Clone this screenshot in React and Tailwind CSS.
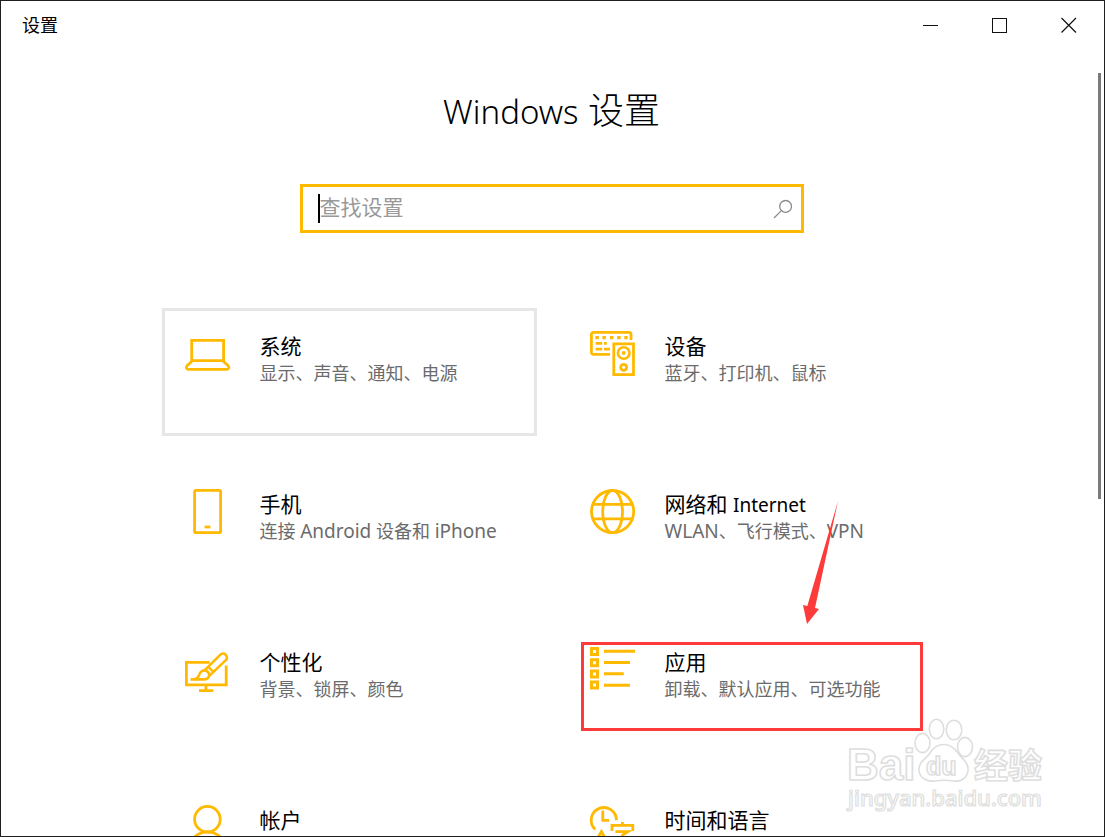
import React from "react";

function Icon({ children }) {
  return (
    <svg
      className="h-[46px] w-[46px] shrink-0 overflow-visible text-[#ffb900]"
      viewBox="0 0 46 46"
      fill="none"
      stroke="currentColor"
      strokeWidth="2.8"
      aria-hidden="true"
    >
      {children}
    </svg>
  );
}

const LaptopIcon = () => (
  <Icon>
    <path d="M6.7 9.4H38.6V29.6H6.7Z" />
    <path d="M7 30.2L2 34.8C1 36 1 38.4 3.4 38.4H41.8C44.2 38.4 44.2 36 43.2 34.8L38.2 30.2" />
  </Icon>
);

const DevicesIcon = () => (
  <Icon>
    <path d="M20 23.3H3.4A2 2 0 0 1 1.4 21.3V3.4A2 2 0 0 1 3.4 1.4H39A2 2 0 0 1 41 3.4V9" />
    <path d="M5.4 6.7h3.4M12.4 6.7h3.4M20 6.7h3.4M27.2 6.7h3.4M34.3 6.7h3.4" strokeWidth="3.2" />
    <path d="M5.6 12.4h6.6M14 12.4h2.8M5.6 18.2h6.6M14 18.2h6" />
    <path d="M23.8 12.8H43.5V43.6H23.8Z" />
    <circle cx="33.7" cy="22" r="5.8" strokeWidth="2.6" />
    <circle cx="33.7" cy="22" r="1.9" fill="currentColor" stroke="none" />
    <circle cx="33.7" cy="36.3" r="3" strokeWidth="2.8" />
  </Icon>
);

const PhoneIcon = () => (
  <Icon>
    <rect x="9.6" y="1.4" width="26" height="42.2" rx="1.2" />
    <path d="M19.6 38h5.8" />
  </Icon>
);

const GlobeIcon = () => (
  <Icon>
    <circle cx="22.6" cy="22.6" r="21.1" />
    <ellipse cx="22.6" cy="22.6" rx="9.9" ry="21.1" />
    <path d="M2.5 15.4H42.7M2.5 29.8H42.7" />
  </Icon>
);

const PersonalizeIcon = () => (
  <Icon>
    <path d="M24.6 15.4H1.4V37.9H41.2V18.6" />
    <path d="M21 38V43.4M14 43.6H28.4" />
    <path d="M19.8 23.2L35.2 7.8A3.8 3.8 0 0 1 40.8 13.2L24.6 28.6" strokeWidth="2.6" />
    <path d="M23.2 19.8L28.8 25.2" strokeWidth="2.4" />
    <path
      d="M5.6 32.4C11.5 32.8 13.4 31 14.2 27.8C15 24.4 19 22 22.4 24.4C25.6 27 24.6 32.4 19 32.4H5.6"
      strokeWidth="2.6"
    />
  </Icon>
);

const AppsIcon = () => (
  <Icon>
    <path
      d="M1.5 1.5h6v6h-6ZM1.5 12.7h6v6h-6ZM1.5 23.9h6v6h-6ZM1.5 35.1h6v6h-6Z"
      strokeWidth="3"
    />
    <path d="M14 4.2H45M14 15.4H40M14 26.8H33.8M14 38.2H40" strokeWidth="3" />
  </Icon>
);

const AccountIcon = () => (
  <Icon>
    <circle cx="22.4" cy="14.2" r="12.8" />
    <path d="M3.6 45.6A18.8 18.8 0 0 1 41.2 45.6" />
  </Icon>
);

const TimeIcon = () => (
  <Icon>
    <path d="M5.2 24.4A12.6 12.6 0 1 1 26.4 15.2" />
    <path d="M12.8 5.6V15.4H19.2" />
    <path d="M6 36L11.4 26.6L16.8 36" />
    <path d="M22 26V20.4H42.8V26M32.4 17V20.4M25.4 26.6H38L32.6 30V36M21 33H44" />
  </Icon>
);

const categories = [
  { title: "系统", detail: "显示、声音、通知、电源", icon: LaptopIcon, hovered: true },
  { title: "设备", detail: "蓝牙、打印机、鼠标", icon: DevicesIcon },
  { title: "手机", detail: "连接 Android 设备和 iPhone", icon: PhoneIcon },
  { title: "网络和 Internet", detail: "WLAN、飞行模式、VPN", icon: GlobeIcon },
  { title: "个性化", detail: "背景、锁屏、颜色", icon: PersonalizeIcon },
  { title: "应用", detail: "卸载、默认应用、可选功能", icon: AppsIcon, marked: true },
  { title: "帐户", icon: AccountIcon },
  { title: "时间和语言", icon: TimeIcon },
];

// Sets runs of Latin letters at their own size inside Chinese text.
function Mixed({ text, latinClass }) {
  return text.split(/([A-Za-z]+)/).map((part, i) =>
    i % 2 ? (
      <span key={i} className={latinClass}>
        {part}
      </span>
    ) : (
      part
    )
  );
}

function Marker() {
  return (
    <span className="pointer-events-none" aria-hidden="true">
      <span className="absolute top-[15px] left-[11px] h-[89px] w-[342px] border-3 border-[#fd3b3b]" />
      <svg className="absolute bottom-full left-[230px] h-[127px] w-10" viewBox="0 0 40 127">
        <path d="M38 1L15 108L19 109L7 124L3 105L7.3 106Z" fill="#fd3b3b" />
      </svg>
    </span>
  );
}

function Category({ title, detail, icon: Glyph, hovered, marked }) {
  return (
    <a
      href="#"
      className={
        "relative flex min-h-32 items-start gap-[29px] border-3 p-5 " +
        (hovered ? "border-[#e6e6e6]" : "border-transparent")
      }
    >
      <Glyph />
      <span className="flex flex-col pt-0.5 whitespace-nowrap">
        <span className="h-[27px] text-[21px] leading-[27px] text-black">
          <Mixed text={title} latinClass="text-[19px]" />
        </span>
        {detail && (
          <span className="h-[27px] text-[18px] leading-[27px] text-[#6b6b6b]">
            <Mixed text={detail} latinClass="text-[19px]" />
          </span>
        )}
      </span>
      {marked && <Marker />}
    </a>
  );
}

function TitleBar() {
  const button = "flex w-[69px] items-center justify-center";
  return (
    <header className="flex h-12 shrink-0 justify-between pr-px">
      <span className="self-center pl-[21px] text-[18px] leading-6 text-black">设置</span>
      <div className="flex">
        <button className={button} aria-label="最小化">
          <svg className="h-4 w-4" viewBox="0 0 16 16" stroke="#111" shapeRendering="crispEdges">
            <path d="M0 8.5H15" />
          </svg>
        </button>
        <button className={button} aria-label="最大化">
          <svg className="h-4 w-4" viewBox="0 0 16 16" fill="none" stroke="#111" shapeRendering="crispEdges">
            <path d="M0.5 1.5H14.5V15.5H0.5Z" />
          </svg>
        </button>
        <button className={button} aria-label="关闭">
          <svg className="h-4 w-4" viewBox="0 0 16 16" stroke="#111" strokeWidth="1.2">
            <path d="M0.5 1L15 15.5M15 1L0.5 15.5" />
          </svg>
        </button>
      </div>
    </header>
  );
}

function SearchBox() {
  return (
    <label className="mx-auto mt-[49px] flex h-[49px] w-[504px] items-center border-3 border-[#ffb900] pr-2 pl-[15px]">
      <span className="h-[29px] w-0.5 bg-black" aria-hidden="true" />
      <input
        type="text"
        aria-label="查找设置"
        placeholder="查找设置"
        className="min-w-0 flex-1 bg-transparent pb-1 text-[21px] leading-7 text-black outline-none placeholder:text-[#999]"
      />
      <svg className="h-5 w-5" viewBox="0 0 20 20" fill="none" stroke="#8c8c8c" strokeWidth="1.3" aria-hidden="true">
        <circle cx="12.6" cy="7.4" r="5.9" />
        <path d="M8.4 11.6L1 19" />
      </svg>
    </label>
  );
}

function Watermark() {
  return (
    <svg
      className="pointer-events-none absolute right-[56px] bottom-5 h-[100px] w-[202px]"
      viewBox="0 0 202 100"
      fill="#fff"
      stroke="#dedede"
      strokeWidth="1.6"
      aria-hidden="true"
    >
      <g fontFamily="'Liberation Sans', 'Noto Sans CJK SC', sans-serif" fontWeight="700">
        <text x="1" y="64" fontSize="44">Bai</text>
        <text x="128" y="62" fontSize="34">经验</text>
      </g>
      <ellipse cx="76.5" cy="27" rx="7.5" ry="9.6" />
      <ellipse cx="90.5" cy="13" rx="7.2" ry="9.8" />
      <ellipse cx="108" cy="14" rx="7.8" ry="9.8" />
      <ellipse cx="119" cy="31" rx="7.5" ry="9.6" />
      <path d="M98 28.5C105 28.5 109 33 112 37C116 43 123 46 122 55C121 62 115 66 108 65C102 64 95 64 89 65C81 66 74 62 73 55C72 46 80 43 84 37C87 32 91 28.5 98 28.5Z" />
      <text x="80" y="59" fontSize="25" fontWeight="700" fontFamily="'Liberation Sans', sans-serif">du</text>
      <text x="2" y="90" fontSize="22" fontFamily="'Noto Sans', sans-serif" fontWeight="500" strokeWidth="1.2">
        jingyan.baidu.com
      </text>
    </svg>
  );
}

export default function App() {
  return (
    <div className="relative flex h-screen flex-col overflow-hidden border border-[#1f1f1f] bg-white font-['Noto_Sans','Noto_Sans_CJK_SC',sans-serif]">
      <TitleBar />
      <main className="min-h-0 flex-1 overflow-hidden pr-0.5">
        <h1 className="mt-[38px] h-12 text-center text-[36px] leading-[48px] font-light text-black">
          <Mixed text="Windows 设置" latinClass="text-[33px]" />
        </h1>
        <SearchBox />
        <nav className="mx-auto mt-[75px] grid max-w-[780px] grid-cols-2 gap-[30px]">
          {categories.map((category) => (
            <Category key={category.title} {...category} />
          ))}
        </nav>
      </main>
      <div className="absolute top-[72px] right-[3px] h-[51%] w-[3px] bg-[#7a7a7a]" aria-hidden="true" />
      <Watermark />
    </div>
  );
}
